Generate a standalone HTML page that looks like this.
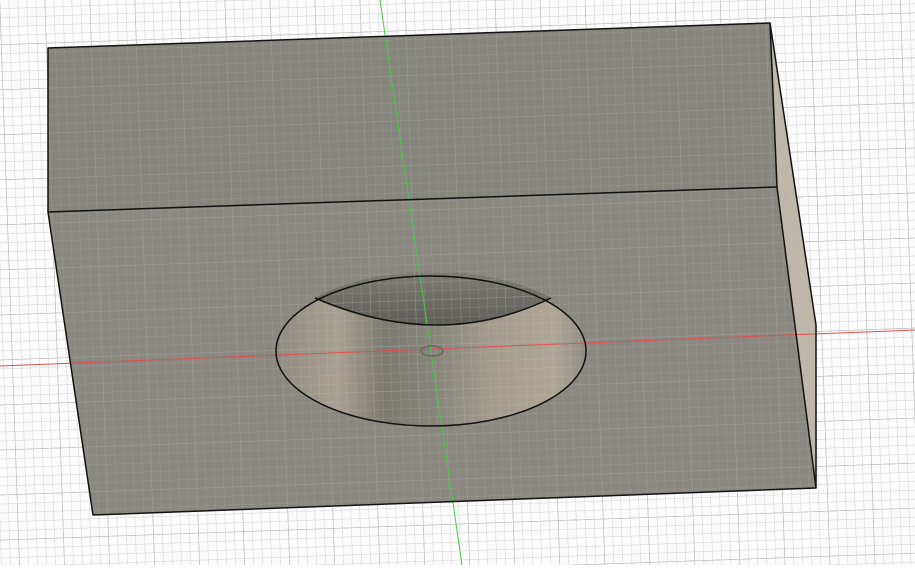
<!DOCTYPE html>
<html><head><style>html,body{margin:0;padding:0;background:#fff;overflow:hidden}</style></head>
<body>
<svg width="915" height="565" viewBox="0 0 915 565" xmlns="http://www.w3.org/2000/svg">
<defs>
<pattern id="g" width="9" height="9" patternUnits="userSpaceOnUse" patternTransform="rotate(-2)">
<path d="M9 0V9M0 9H9" stroke="#d6d6d6" stroke-width="1" fill="none"/>
</pattern>
<pattern id="G" width="45" height="45" patternUnits="userSpaceOnUse" patternTransform="rotate(-2)">
<path d="M45 0V45M0 45H45" stroke="#b0b0b0" stroke-width="1" fill="none"/>
</pattern>
<linearGradient id="hole" x1="0" x2="1" y1="0" y2="0">
<stop offset="0" stop-color="#8e8b80"/>
<stop offset="0.2" stop-color="#a8a090"/>
<stop offset="0.35" stop-color="#7d7a71"/>
<stop offset="0.5" stop-color="#85837a"/>
<stop offset="0.7" stop-color="#a39c8c"/>
<stop offset="0.9" stop-color="#aea694"/>
<stop offset="1" stop-color="#8f8c82"/>
</linearGradient>
<linearGradient id="inner" x1="0" x2="0" y1="0" y2="1">
<stop offset="0" stop-color="#7d7c74"/>
<stop offset="1" stop-color="#5f5e59"/>
</linearGradient>
</defs>
<rect width="915" height="565" fill="#fbfbfb"/>
<rect width="915" height="565" fill="url(#g)"/>
<rect width="915" height="565" fill="url(#G)"/>
<polygon points="48,48 770,23 777,187 48,212" fill="#7c7b73" fill-opacity="0.92"/>
<polygon points="48,212 777,187 816,488 93,515" fill="#807e76" fill-opacity="0.92"/>
<polygon points="770,23 816,325 816,488 777,187" fill="#b8b1a1" fill-opacity="0.92"/>
<ellipse cx="431" cy="351" rx="155" ry="75" fill="url(#hole)"/>
<path d="M315,298 A155,75 0 0 1 551,298 Q440,352 315,298 Z" fill="url(#inner)"/>
<rect width="915" height="565" fill="url(#g)" opacity="0.25"/>
<rect width="915" height="565" fill="url(#G)" opacity="0.35"/>
<line x1="0" y1="366" x2="915" y2="330" stroke="#e05050" stroke-width="1"/>
<line x1="380" y1="0" x2="462" y2="565" stroke="#40d040" stroke-width="1"/>
<ellipse cx="432" cy="351" rx="11" ry="5" fill="none" stroke="#6d6c66" stroke-width="2"/>
<g fill="none" stroke="#111" stroke-width="1.5" stroke-linejoin="round">
<polygon points="48,48 770,23 816,325 816,488 93,515 48,212"/>
<line x1="48" y1="212" x2="777" y2="187"/>
<line x1="770" y1="23" x2="777" y2="187"/>
<line x1="777" y1="187" x2="816" y2="488"/>
<ellipse cx="431" cy="351" rx="155" ry="75"/>
<path d="M315,298 Q440,352 551,298"/>
</g>
</svg>
</body></html>
